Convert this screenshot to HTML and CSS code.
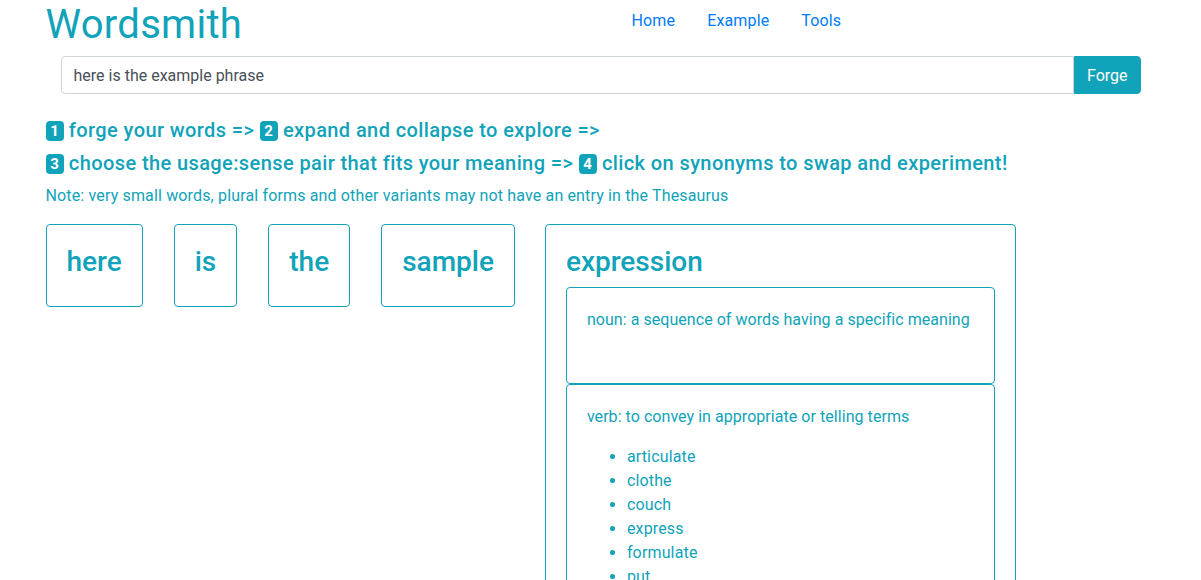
FILE: index.html
```html
<!DOCTYPE html>
<html lang="en">
<head>
<meta charset="utf-8">
<title>Wordsmith</title>
<link rel="stylesheet" href="styles.css">
</head>
<body>
<div class="container">
  <header class="top-row">
    <div class="half"><h1 class="brand">Wordsmith</h1></div>
    <div class="half">
      <ul class="nav">
        <li><a class="nav-link" href="#">Home</a></li>
        <li><a class="nav-link" href="#">Example</a></li>
        <li><a class="nav-link" href="#">Tools</a></li>
      </ul>
    </div>
  </header>

  <form class="forge-form">
    <div class="input-group">
      <input class="phrase-input" type="text" value="here is the example phrase">
      <button class="forge-btn" type="button">Forge</button>
    </div>
  </form>

  <h5 class="step-line"><span class="badge">1</span> forge your words =&gt; <span class="badge">2</span> expand and collapse to explore =&gt;</h5>
  <h5 class="step-line"><span class="badge">3</span> choose the usage:sense pair that fits your meaning =&gt; <span class="badge">4</span> click on synonyms to swap and experiment!</h5>
  <p class="note">Note: very small words, plural forms and other variants may not have an entry in the Thesaurus</p>

  <div class="words">
    <div class="word-card"><h3 class="word">here</h3></div>
    <div class="word-card"><h3 class="word">is</h3></div>
    <div class="word-card"><h3 class="word">the</h3></div>
    <div class="word-card"><h3 class="word">sample</h3></div>
    <div class="word-card expanded">
      <h3 class="word">expression</h3>
      <div class="sense-card">
        <p class="sense">noun: a sequence of words having a specific meaning</p>
        <ul class="synonyms"></ul>
      </div>
      <div class="sense-card">
        <p class="sense">verb: to convey in appropriate or telling terms</p>
        <ul class="synonyms">
          <li>articulate</li>
          <li>clothe</li>
          <li>couch</li>
          <li>express</li>
          <li>formulate</li>
          <li>put</li>
          <li>phrase</li>
          <li>word</li>
        </ul>
      </div>
    </div>
  </div>
</div>
</body>
</html>
```

FILE: styles.css
```css
* { box-sizing: border-box; }
html, body { margin: 0; padding: 0; }
body {
  font-family: Roboto, "Liberation Sans", sans-serif;
  font-size: 16px;
  line-height: 1.5;
  letter-spacing: 0.15px;
  color: #10a3b9;
  background: #fff;
  font-feature-settings: "calt" 0, "liga" 0;
}
.container {
  width: 1140px;
  margin: 0 auto;
  padding: 0 15px;
}
.top-row {
  display: flex;
  margin: 0 -15px;
}
.half {
  flex: 0 0 50%;
  padding: 0 15px;
}
.brand {
  margin: 0;
  padding-top: 2px;
  font-size: 40px;
  font-weight: 400;
  line-height: 1.15;
  letter-spacing: 0.3px;
  color: #10a3b9;
}
.nav {
  display: flex;
  list-style: none;
  margin: 0;
  padding: 0;
}
.nav-link {
  display: block;
  padding: 9px 16px 7px;
  color: #007bff;
  text-decoration: none;
}
.forge-form {
  margin-top: 8px;
  padding: 0 15px;
}
.input-group {
  display: flex;
}
.phrase-input {
  flex: 1;
  height: 38px;
  padding: 6px 12px;
  font: inherit;
  font-size: 16px;
  color: #495057;
  border: 1px solid #ced4da;
  border-radius: 4px 0 0 4px;
  outline: none;
}
.forge-btn {
  height: 38px;
  padding: 7px 12px 5px;
  font: inherit;
  font-size: 16px;
  color: #fff;
  background: #10a3b9;
  border: 1px solid #10a3b9;
  border-radius: 0 4px 4px 0;
}
.step-line {
  font-size: 20px;
  font-weight: 500;
  line-height: 1.2;
  letter-spacing: 0.4px;
  margin: 0 0 9px;
}
.forge-form + .step-line { margin-top: 24px; }
.badge {
  display: inline-block;
  min-width: 18px;
  padding: 3px 4px;
  font-size: 15px;
  font-weight: 700;
  line-height: 14px;
  letter-spacing: 0;
  color: #fff;
  background: #10a3b9;
  border-radius: 4px;
  text-align: center;
  vertical-align: 1px;
}
.note {
  margin: 1px 0 16px;
}
.words {
  display: flex;
  align-items: flex-start;
  gap: 31px;
}
.word-card {
  border: 1px solid #10a3b9;
  border-radius: 4px;
  padding: 20px 20px 19px;
}
.word {
  margin: 0 0 8px;
  font-size: 28px;
  font-weight: 500;
  line-height: 1.2;
  letter-spacing: 0;
}
.expanded {
  width: 471px;
  margin-left: -1px;
}
.sense-card {
  display: flex;
  flex-direction: column;
  border: 1px solid #10a3b9;
  border-radius: 4px;
  padding: 20px 20px 19px;
}
.sense {
  margin: 0 0 16px;
  letter-spacing: 0.05px;
  white-space: nowrap;
}
.synonyms {
  margin: 0 0 16px;
  padding-left: 40px;
}
```
